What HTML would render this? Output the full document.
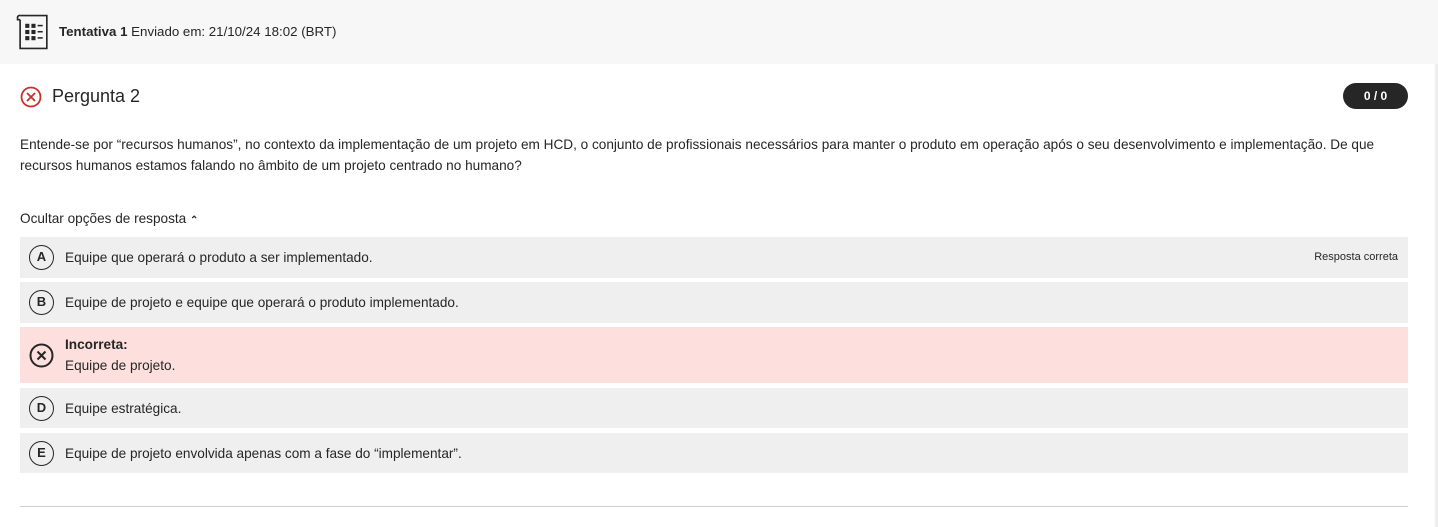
<!DOCTYPE html>
<html><head><meta charset="utf-8"><style>
*{margin:0;padding:0;box-sizing:border-box}
body{width:1438px;height:527px;background:#fff;font-family:"Liberation Sans",sans-serif;color:#262626;position:relative;overflow:hidden;font-size:13.6px}
.hdr{position:absolute;left:0;top:0;width:1438px;height:64px;background:#f7f7f7}
.hdr .t{position:absolute;left:59px;top:24px;font-size:13.3px}
.q{position:absolute;left:52px;top:86px;font-size:18px;color:#262626}
.pill{position:absolute;left:1343px;top:83px;width:65px;height:26px;border-radius:13px;background:#262626;color:#fff;font-weight:bold;font-size:12px;text-align:center;line-height:26px}
.txt{position:absolute;left:20px;top:134px;width:1380px;line-height:21px;font-size:13.6px}
.hide{position:absolute;left:20px;top:211px}
.row{position:absolute;left:20px;width:1388px;background:#efefef}
.c{position:absolute;left:9px;width:25px;height:25px;border:1.5px solid #262626;border-radius:50%;text-align:center;line-height:22px;font-weight:bold;font-size:13px}
.l{position:absolute;left:45px}
.rt{position:absolute;right:10px;top:14px;font-size:11px}
.line{position:absolute;left:20px;top:506px;width:1388px;height:1px;background:#cfcfcf}
.sb{position:absolute;right:0;top:64px;width:3px;height:463px;background:#eee}
</style></head><body>
<div class="hdr">
<svg style="position:absolute;left:16px;top:13px" width="37" height="38" viewBox="0 0 36 36" fill="none" stroke="#262626" stroke-width="1.6">
<path d="M4 2h26v32H4V6"/><path d="M4 6H1.5V3.5A2 2 0 0 1 4 2"/>
<g fill="#262626" stroke="none">
<rect x="9" y="10" width="4" height="4"/><rect x="15" y="10" width="4" height="4"/><rect x="21" y="11" width="5" height="1.5"/>
<rect x="9" y="16" width="4" height="4"/><rect x="15" y="16" width="4" height="4"/><rect x="21" y="17" width="5" height="1.5"/>
<rect x="9" y="22" width="4" height="4"/><rect x="15" y="22" width="4" height="4"/><rect x="21" y="23" width="5" height="1.5"/>
</g></svg>
<div class="t"><b>Tentativa 1</b> Enviado em: 21/10/24 18:02 (BRT)</div>
</div>
<svg style="position:absolute;left:20px;top:86px" width="22" height="22" viewBox="0 0 22 22" fill="none" stroke="#c9302c" stroke-width="1.8"><circle cx="11" cy="11" r="9.5"/><path d="M7 7l8 8M15 7l-8 8"/></svg>
<div class="q">Pergunta 2</div>
<div class="pill">0 / 0</div>
<div class="txt">Entende-se por “recursos humanos”, no contexto da implementação de um projeto em HCD, o conjunto de profissionais necessários para manter o produto em operação após o seu desenvolvimento e implementação. De que recursos humanos estamos falando no âmbito de um projeto centrado no humano?</div>
<div class="hide">Ocultar opções de resposta <span style="font-size:10px;font-weight:bold">&#8963;</span></div>
<div class="row" style="top:237px;height:41px"><div class="c" style="top:8px">A</div><div class="l" style="top:13px">Equipe que operará o produto a ser implementado.</div><div class="rt">Resposta correta</div></div>
<div class="row" style="top:282px;height:41px"><div class="c" style="top:8px">B</div><div class="l" style="top:13px">Equipe de projeto e equipe que operará o produto implementado.</div></div>
<div class="row" style="top:327px;height:56px;background:#fde0de">
<svg style="position:absolute;left:9px;top:16px" width="25" height="25" viewBox="0 0 25 25" fill="none" stroke="#262626" stroke-width="2"><circle cx="12.5" cy="12.5" r="11"/><path d="M8.5 8.5l8 8M16.5 8.5l-8 8"/></svg>
<div class="l" style="top:10px;font-weight:bold">Incorreta:</div><div class="l" style="top:31px">Equipe de projeto.</div></div>
<div class="row" style="top:388px;height:40px"><div class="c" style="top:8px">D</div><div class="l" style="top:13px">Equipe estratégica.</div></div>
<div class="row" style="top:433px;height:40px"><div class="c" style="top:8px">E</div><div class="l" style="top:13px">Equipe de projeto envolvida apenas com a fase do “implementar”.</div></div>
<div class="line"></div>
<div class="sb"></div>
</body></html>
